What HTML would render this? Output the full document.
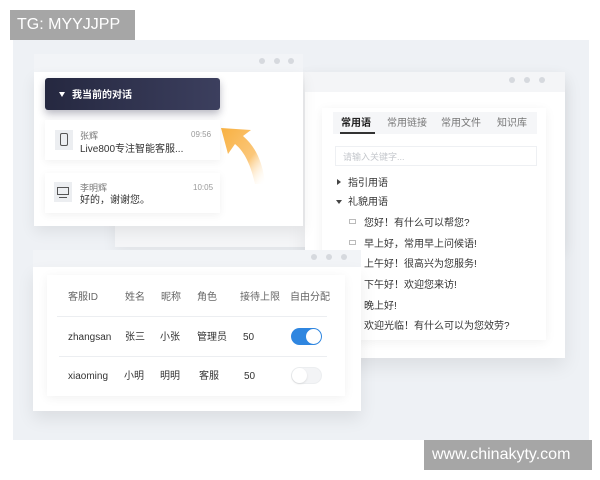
<!DOCTYPE html>
<html><head><meta charset="utf-8"><style>
*{margin:0;padding:0;box-sizing:border-box}
body{width:600px;height:480px;background:#fff;position:relative;overflow:hidden;font-family:"Liberation Sans","Noto Sans CJK SC",sans-serif;color:#333}
.a{position:absolute}
.dot{position:absolute;width:6px;height:6px;border-radius:50%;background:#d6d9de}
.t{position:absolute;font-size:10px;line-height:12px;height:12px;white-space:nowrap;margin-top:2px}
.tri{position:absolute;width:0;height:0}
</style></head><body>
<div class="a" style="left:13px;top:40px;width:576px;height:400px;background:#eef1f5"></div>
<div class="a" style="left:10px;top:10px;width:125px;height:30px;background:#a6a6a6;color:#fff;font-size:16px;line-height:30px;padding-left:7px">TG: MYYJJPP</div>
<div class="a" style="left:424px;top:440px;width:168px;height:30px;background:#a6a6a6;color:#fff;font-size:16px;line-height:30px;padding-left:8px">www.chinakyty.com</div>

<!-- window B -->
<div class="a" style="left:115px;top:72px;width:450px;height:175px;background:#f4f5f7;box-shadow:0 6px 14px rgba(0,0,0,.06)"></div>
<div class="a" style="left:305px;top:72px;width:260px;height:286px;background:#f4f5f7;box-shadow:0 8px 18px rgba(0,0,0,.08)"></div>
<div class="a" style="left:305px;top:92px;width:260px;height:266px;background:#fff"></div>
<div class="dot" style="left:509px;top:77px"></div><div class="dot" style="left:524px;top:77px"></div><div class="dot" style="left:539px;top:77px"></div>
<div class="a" style="left:322px;top:108px;width:224px;height:232px;background:#fff;box-shadow:0 2px 10px rgba(0,0,0,.06)"></div>
<div class="a" style="left:333px;top:112px;width:204px;height:22px;background:#f5f6f8"></div>
<div class="t" style="left:341px;top:116px;font-weight:bold;color:#222">常用语</div>
<div class="a" style="left:340px;top:132px;width:35px;height:2px;background:#333"></div>
<div class="t" style="left:387px;top:116px;color:#777">常用链接</div>
<div class="t" style="left:441px;top:116px;color:#777">常用文件</div>
<div class="t" style="left:497px;top:116px;color:#777">知识库</div>
<div class="a" style="left:335px;top:146px;width:202px;height:20px;background:#fff;border:1px solid #eef0f3"></div>
<div class="t" style="left:343px;top:149px;color:#c4c7cc;font-size:9px">请输入关键字...</div>
<div class="tri" style="left:337px;top:179px;border-left:4px solid #444;border-top:3px solid transparent;border-bottom:3px solid transparent"></div>
<div class="t" style="left:348px;top:176px">指引用语</div>
<div class="tri" style="left:336px;top:200px;border-top:4px solid #444;border-left:3px solid transparent;border-right:3px solid transparent"></div>
<div class="t" style="left:348px;top:195px">礼貌用语</div>
<div class="a" style="left:349px;top:219px;width:7px;height:5px;border:1px solid #bbb"></div>
<div class="a" style="left:349px;top:240px;width:7px;height:5px;border:1px solid #bbb"></div>
<div class="t" style="left:364px;top:216px">您好！有什么可以帮您?</div>
<div class="t" style="left:364px;top:237px">早上好，常用早上问候语!</div>
<div class="t" style="left:364px;top:257px">上午好！很高兴为您服务!</div>
<div class="t" style="left:364px;top:278px">下午好！欢迎您来访!</div>
<div class="t" style="left:364px;top:299px">晚上好!</div>
<div class="t" style="left:364px;top:319px">欢迎光临！有什么可以为您效劳?</div>

<!-- window A -->
<div class="a" style="left:34px;top:54px;width:269px;height:18px;background:#f2f4f7"></div>
<div class="dot" style="left:259px;top:58px"></div><div class="dot" style="left:274px;top:58px"></div><div class="dot" style="left:288px;top:58px"></div>
<div class="a" style="left:34px;top:72px;width:269px;height:154px;background:#fff;box-shadow:0 6px 14px rgba(0,0,0,.07)"></div>
<div class="a" style="left:45px;top:78px;width:175px;height:32px;border-radius:3px;background:linear-gradient(90deg,#252840,#3c3f5e);box-shadow:0 4px 8px rgba(30,30,60,.3)"></div>
<div class="tri" style="left:59px;top:92px;border-top:5px solid #fff;border-left:3.5px solid transparent;border-right:3.5px solid transparent"></div>
<div class="t" style="left:72px;top:88px;color:#fff;font-weight:bold">我当前的对话</div>
<div class="a" style="left:45px;top:120px;width:175px;height:40px;background:#fff;box-shadow:0 2px 8px rgba(0,0,0,.06)"></div>
<div class="a" style="left:55px;top:130px;width:18px;height:20px;background:#eceef1"></div>
<div class="a" style="left:60px;top:133px;width:8px;height:13px;border:1.3px solid #555;border-radius:2px"></div>
<div class="t" style="left:80px;top:128px;font-size:9px;color:#777">张辉</div>
<div class="t" style="left:191px;top:127px;font-size:8px;color:#999">09:56</div>
<div class="t" style="left:80px;top:142px">Live800专注智能客服...</div>
<div class="a" style="left:45px;top:173px;width:175px;height:40px;background:#fff;box-shadow:0 2px 8px rgba(0,0,0,.06)"></div>
<div class="a" style="left:54px;top:182px;width:18px;height:20px;background:#eceef1"></div>
<div class="a" style="left:57px;top:187px;width:12px;height:8px;border:1.3px solid #555"></div>
<div class="a" style="left:59px;top:197px;width:8px;height:1.3px;background:#555"></div>
<div class="t" style="left:80px;top:180px;font-size:9px;color:#777">李明辉</div>
<div class="t" style="left:193px;top:180px;font-size:8px;color:#999">10:05</div>
<div class="t" style="left:80px;top:193px">好的，谢谢您。</div>
<svg class="a" style="left:215px;top:122px" width="60" height="70"><defs><linearGradient id="g" x1="0" y1="0" x2="1" y2="1"><stop offset="0" stop-color="#f8b040"/><stop offset=".6" stop-color="#fbc77a"/><stop offset="1" stop-color="#fff" stop-opacity="0"/></linearGradient></defs>
<path d="M6 6 L36 8 L28 14 C40 24 48 40 50 62 L40 62 C36 44 30 30 20 22 L13 32 Z" fill="url(#g)"/></svg>

<!-- window C -->
<div class="a" style="left:33px;top:250px;width:328px;height:17px;background:#f2f4f7"></div>
<div class="dot" style="left:311px;top:254px"></div><div class="dot" style="left:326px;top:254px"></div><div class="dot" style="left:341px;top:254px"></div>
<div class="a" style="left:33px;top:267px;width:328px;height:144px;background:#fff;box-shadow:0 8px 16px rgba(0,0,0,.08)"></div>
<div class="a" style="left:47px;top:275px;width:298px;height:121px;background:#fff;box-shadow:0 2px 10px rgba(0,0,0,.06)"></div>
<div class="t" style="left:68px;top:290px;color:#666">客服ID</div>
<div class="t" style="left:125px;top:290px;color:#666">姓名</div>
<div class="t" style="left:161px;top:290px;color:#666">昵称</div>
<div class="t" style="left:197px;top:290px;color:#666">角色</div>
<div class="t" style="left:240px;top:290px;color:#666">接待上限</div>
<div class="t" style="left:290px;top:290px;color:#666">自由分配</div>
<div class="a" style="left:57px;top:316px;width:270px;height:1px;background:#eceef1"></div>
<div class="t" style="left:68px;top:330px">zhangsan</div>
<div class="t" style="left:125px;top:330px">张三</div>
<div class="t" style="left:160px;top:330px">小张</div>
<div class="t" style="left:197px;top:330px">管理员</div>
<div class="t" style="left:243px;top:330px">50</div>
<div class="a" style="left:291px;top:328px;width:31px;height:17px;border-radius:9px;background:#2f86e0"></div>
<div class="a" style="left:306px;top:329px;width:15px;height:15px;border-radius:50%;background:#fff"></div>
<div class="a" style="left:59px;top:356px;width:268px;height:1px;background:#eceef1"></div>
<div class="t" style="left:68px;top:369px">xiaoming</div>
<div class="t" style="left:124px;top:369px">小明</div>
<div class="t" style="left:160px;top:369px">明明</div>
<div class="t" style="left:199px;top:369px">客服</div>
<div class="t" style="left:244px;top:369px">50</div>
<div class="a" style="left:291px;top:367px;width:31px;height:17px;border-radius:9px;background:#f3f4f6;border:1px solid #eceef0"></div>
<div class="a" style="left:292px;top:368px;width:15px;height:15px;border-radius:50%;background:#fff;box-shadow:0 1px 2px rgba(0,0,0,.1)"></div>
</body></html>
